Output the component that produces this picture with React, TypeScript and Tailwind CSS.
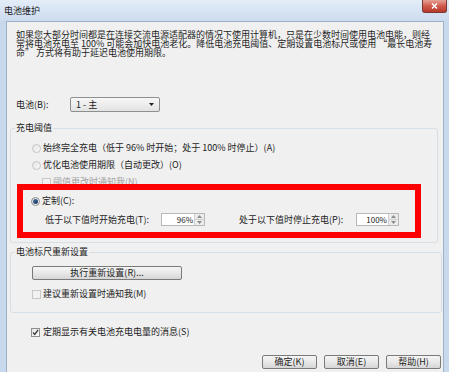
import React from "react";

function Radio({ checked, disabled }: { checked?: boolean; disabled?: boolean }) {
  return (
    <span
      className={
        "inline-flex w-[9px] h-[9px] shrink-0 rounded-full border items-center justify-center " +
        (disabled
          ? "border-[#c4c4c4] bg-gradient-to-br from-[#e6e6e6] to-[#f7f7f7]"
          : "border-[#8d8d8d] bg-gradient-to-br from-[#dcdcdc] to-[#fbfbfb]")
      }
    >
      {checked && <span className="w-[5px] h-[5px] rounded-full bg-gradient-to-br from-[#4a7cae] to-[#102e52]" />}
    </span>
  );
}

function Check({ checked, disabled }: { checked?: boolean; disabled?: boolean }) {
  return (
    <span
      className={
        "inline-flex w-[9px] h-[9px] shrink-0 border items-center justify-center " +
        (disabled ? "border-[#c8c8c8] bg-[#f2f2f2]" : "border-[#8f8f8f] bg-gradient-to-br from-[#e4e4e4] to-[#ffffff]")
      }
    >
      {checked && (
        <svg width="7" height="7" viewBox="0 0 7 7">
          <path d="M1 3.5 L2.8 5.5 L6 1" fill="none" stroke="#3a3a3a" strokeWidth="1.3" />
        </svg>
      )}
    </span>
  );
}

function Spin({ value, w }: { value: string; w: number }) {
  return (
    <div className="flex h-[13px] border border-[#b5b8bd] bg-white" style={{ width: w }}>
      <div className="flex-1 text-right pr-[1px] text-[8px] leading-[11px] text-[#222]">{value}</div>
      <div className="w-[10px] flex flex-col border-l border-[#d0d0d0] bg-[#ececec]">
        <div className="flex-1 flex items-center justify-center border-b border-[#d0d0d0]">
          <svg width="5" height="3" viewBox="0 0 5 3">
            <path d="M0 3 L2.5 0 L5 3 Z" fill="#8a8a8a" />
          </svg>
        </div>
        <div className="flex-1 flex items-center justify-center">
          <svg width="5" height="3" viewBox="0 0 5 3">
            <path d="M0 0 L2.5 3 L5 0 Z" fill="#8a8a8a" />
          </svg>
        </div>
      </div>
    </div>
  );
}

function Btn({ children, w }: { children: React.ReactNode; w: number }) {
  return (
    <div
      className="h-[14px] flex items-center justify-center rounded-[2px] border border-[#7a7a7a] bg-gradient-to-b from-[#f5f5f5] via-[#e8e8e8] to-[#d6d6d6] text-[9px] leading-[10px] text-[#222]"
      style={{ width: w }}
    >
      {children}
    </div>
  );
}

export default function App() {
  return (
    <div className="relative w-[449px] h-[372px] overflow-hidden bg-[#c9d9ed] font-['Noto_Sans_CJK_SC','Noto_Sans',sans-serif] text-[#1c1c1c]">
      {/* title bar */}
      <div className="h-[21px] flex justify-between bg-gradient-to-b from-[#e4edf8] to-[#cbdbef]">
        <div className="pl-[4px] text-[9px] leading-[21px] text-[#1a1a1a]">电池维护</div>
        <div className="mr-[2px] w-[25px] h-[13px] rounded-b-[3px] border border-t-0 border-[#7a3a33] bg-gradient-to-b from-[#e4a196] via-[#cf5a4c] to-[#b8392b] flex items-center justify-center">
          <svg width="7" height="6" viewBox="0 0 7 6">
            <path d="M1 0.5 L6 5.5 M6 0.5 L1 5.5" stroke="#ffffff" strokeWidth="1.5" />
          </svg>
        </div>
      </div>

      {/* body */}
      <div className="ml-[6px] w-[438px] h-[360px] border border-[#9fb1c8] bg-[#f0f0f0] flex flex-col">
        <div className="mt-[8px] pl-[9px] text-[9px] leading-[9px] text-[#1e1e1e]">
          <div className="whitespace-nowrap">如果您大部分时间都是在连接交流电源适配器的情况下使用计算机，只是在少数时间使用电池电能，则经</div>
          <div className="whitespace-nowrap">常将电池充电至 100% 可能会加快电池老化。降低电池充电阈值、定期设置电池标尺或使用 “最长电池寿</div>
          <div className="whitespace-nowrap">命” 方式将有助于延迟电池使用期限。</div>
        </div>

        {/* battery row */}
        <div className="mt-[40px] pl-[9px] h-[15px] flex items-center text-[9px] leading-[10px]">
          <span className="w-[54px]">电池(B):</span>
          <div className="w-[90px] h-[15px] flex items-center justify-between rounded-[2px] border border-[#8e8f8f] bg-gradient-to-b from-[#f7f7f7] to-[#e3e3e3] px-[5px]">
            <span>1 - 主</span>
            <svg width="5" height="3" viewBox="0 0 5 3">
              <path d="M0 0 L2.5 3 L5 0 Z" fill="#222" />
            </svg>
          </div>
        </div>

        {/* charge threshold group */}
        <fieldset className="mt-[11px] ml-[3px] mr-[5px] border border-[#d5dfe5] rounded-[3px] pb-[16px] text-[9px] leading-[12px]">
          <legend className="ml-[4px] px-[1px] leading-[10px]">充电阈值</legend>
          <div className="mt-[9px] pl-[21px] h-[12px] flex items-center gap-[2px]">
            <Radio disabled />
            <span className="whitespace-nowrap">始终完全充电（低于 96% 时开始；处于 100% 时停止）(A)</span>
          </div>
          <div className="mt-[5px] pl-[21px] h-[12px] flex items-center gap-[2px]">
            <Radio disabled />
            <span className="whitespace-nowrap">优化电池使用期限（自动更改）(O)</span>
          </div>
          <div className="mt-[5px] pl-[31px] h-[12px] flex items-center gap-[2px] text-[#a3a3a3]">
            <Check disabled />
            <span className="whitespace-nowrap">阈值更改时通知我(N)</span>
          </div>
          <div className="mt-[7px] pl-[20px] h-[12px] flex items-center gap-[2px]">
            <Radio checked />
            <span className="whitespace-nowrap">定制(C):</span>
          </div>
          <div className="mt-[6px] pl-[34px] h-[13px] flex items-center">
            <span className="w-[116px] whitespace-nowrap">低于以下值时开始充电(T):</span>
            <Spin value="96%" w={44} />
            <span className="ml-[34px] w-[117px] whitespace-nowrap">处于以下值时停止充电(P):</span>
            <Spin value="100%" w={43} />
          </div>
        </fieldset>

        {/* calibration group */}
        <fieldset className="mt-[4px] ml-[3px] mr-[1px] border border-[#d5dfe5] rounded-[3px] pb-[12px] text-[9px] leading-[12px]">
          <legend className="ml-[4px] px-[1px] leading-[10px]">电池标尺重新设置</legend>
          <div className="mt-[9px] pl-[21px] flex">
            <Btn w={150}>执行重新设置(R)...</Btn>
          </div>
          <div className="mt-[8px] pl-[21px] h-[12px] flex items-center gap-[2px]">
            <Check disabled />
            <span className="whitespace-nowrap">建议重新设置时通知我(M)</span>
          </div>
        </fieldset>

        <div className="mt-[13px] pl-[24px] h-[12px] flex items-center gap-[3px] text-[9px] leading-[12px]">
          <Check checked />
          <span className="whitespace-nowrap">定期显示有关电池充电电量的消息(S)</span>
        </div>

        <div className="mt-[17px] pr-[2px] flex justify-end gap-[7px]">
          <Btn w={55}>确定(K)</Btn>
          <Btn w={55}>取消(E)</Btn>
          <Btn w={55}>帮助(H)</Btn>
        </div>
      </div>

      {/* red annotation box */}
      <div className="absolute left-[17px] top-[184px] w-[404px] h-[54px] border-[6px] border-[#fe0000]" />
    </div>
  );
}
